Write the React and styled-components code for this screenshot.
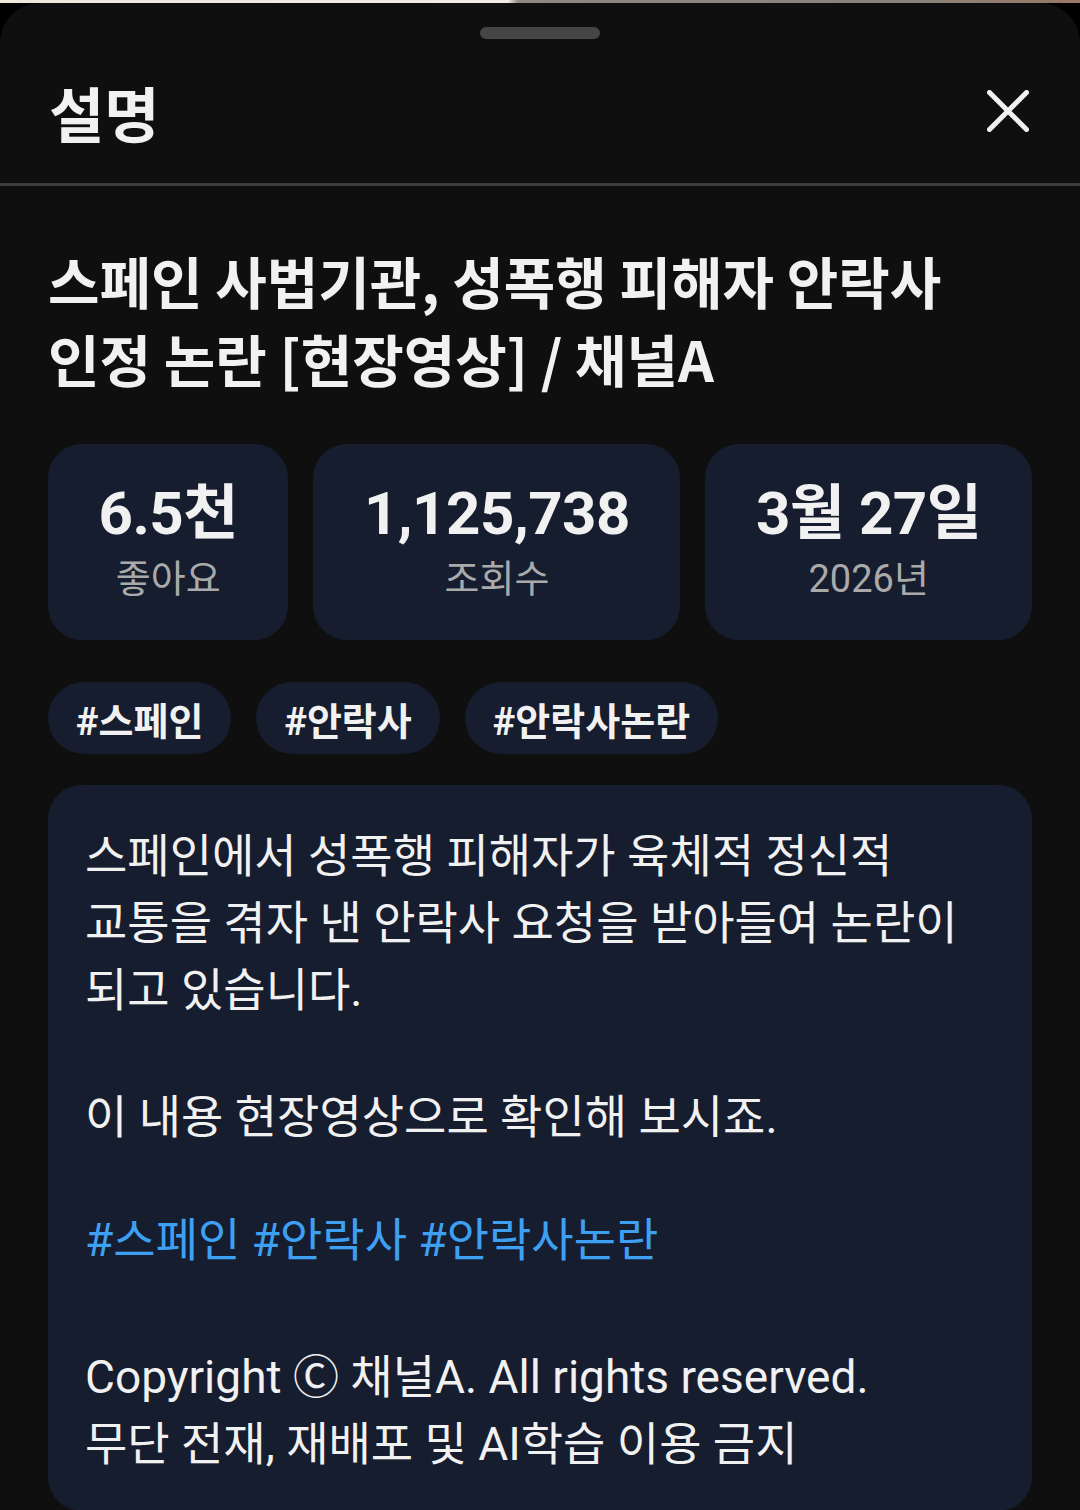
import React from 'react';
import styled, { createGlobalStyle } from 'styled-components';

const GlobalStyle = createGlobalStyle`
    html, body {
        margin: 0;
        padding: 0;
        background: #000000;
    }
    body {
        font-family: Roboto, "Noto Sans CJK KR", sans-serif;
        color: #f1f1f1;
    }
    * {
        box-sizing: border-box;
    }
`

const VideoEdge = styled.div`
    height: 3px;
    background: linear-gradient(90deg, #efe6dc 0%, #f3ece2 47%, #8f887e 48%, #8a8178 85%, #9a7866 100%);
`

const Sheet = styled.div`
    background: #0f0f0f;
    border-radius: 40px 40px 0 0;
    min-height: 1507px;
`

const HandleRow = styled.div`
    display: flex;
    justify-content: center;
    padding-top: 24px;
`

const Handle = styled.div`
    width: 120px;
    height: 12px;
    border-radius: 6px;
    background: #454545;
`

const Header = styled.div`
    display: flex;
    align-items: center;
    justify-content: space-between;
    height: 144px;
    padding: 0 51px 0 49px;

    h2 {
        margin: 0;
        font-family: "Noto Sans CJK KR", sans-serif;
        font-size: 60px;
        font-weight: 700;
        color: #f1f1f1;
    }
`

const CloseButton = styled.button`
    display: flex;
    align-items: center;
    justify-content: center;
    width: 42px;
    height: 42px;
    padding: 0;
    border: none;
    background: transparent;
`

const Divider = styled.div`
    height: 3px;
    background: #3c3c3c;
`

const Body = styled.div`
    padding: 0 48px;
`

const Title = styled.h1`
    margin: 55px 0 0 0;
    font-family: "Noto Sans CJK KR", sans-serif;
    font-size: 56px;
    font-weight: 700;
    line-height: 78px;
    word-break: keep-all;
    color: #f1f1f1;
`

const StatsRow = styled.div`
    display: flex;
    gap: 25px;
    margin-top: 47px;
`

const StatCard = styled.div`
    flex: 1 1 auto;
    display: flex;
    flex-direction: column;
    align-items: center;
    justify-content: center;
    height: 196px;
    padding: 4px 40px 0;
    border-radius: 34px;
    background: #161d2f;

    strong {
        font-size: 60px;
        font-weight: 700;
        line-height: 70px;
        color: #f1f1f1;
        letter-spacing: -0.5px;
        white-space: nowrap;
    }
    span {
        font-size: 38px;
        line-height: 60px;
        color: #aaaaaa;
        white-space: nowrap;
    }
`

const TagRow = styled.div`
    display: flex;
    gap: 25px;
    margin-top: 42px;
`

const Tag = styled.div`
    display: flex;
    align-items: center;
    height: 72px;
    padding: 0 28px;
    border-radius: 36px;
    background: #161d2f;
    font-family: Roboto, "Noto Sans CJK KR", sans-serif;
    font-size: 38px;
    font-weight: 700;
    color: #f1f1f1;
`

const Description = styled.div`
    margin-top: 31px;
    padding: 38px 37px 33px;
    border-radius: 34px;
    background: #161d2f;
    font-family: Roboto, "Noto Sans CJK KR", sans-serif;
    font-size: 46px;
    line-height: 67px;
    word-break: keep-all;
    color: #f1f1f1;
`

const Paragraph = styled.p`
    margin: ${({ $gap }) => $gap || 0}px 0 0 0;
    color: ${({ $link }) => ($link ? '#3ea0f2' : 'inherit')};
`

const CloseIcon = () => (
    <svg width="42" height="42" viewBox="0 0 42 42" fill="none">
        <path d="M2.5 2.5 L39.5 39.5 M39.5 2.5 L2.5 39.5" stroke="#f1f1f1" strokeWidth="5" strokeLinecap="round" />
    </svg>
)

const stats = [
    { value: '6.5천', label: '좋아요' },
    { value: '1,125,738', label: '조회수' },
    { value: '3월 27일', label: '2026년' },
]

const tags = ['#스페인', '#안락사', '#안락사논란']

const App = () => {
    return <div>
        <GlobalStyle />
        <VideoEdge />
        <Sheet>
            <HandleRow><Handle /></HandleRow>
            <Header>
                <h2>설명</h2>
                <CloseButton aria-label="닫기"><CloseIcon /></CloseButton>
            </Header>
            <Divider />
            <Body>
                <Title>스페인 사법기관, 성폭행 피해자 안락사 인정 논란 [현장영상] / 채널A</Title>
                <StatsRow>
                    {stats.map(s => (
                        <StatCard key={s.label}>
                            <strong>{s.value}</strong>
                            <span>{s.label}</span>
                        </StatCard>
                    ))}
                </StatsRow>
                <TagRow>
                    {tags.map(t => <Tag key={t}>{t}</Tag>)}
                </TagRow>
                <Description>
                    <Paragraph>스페인에서 성폭행 피해자가 육체적 정신적 교통을 겪자 낸 안락사 요청을 받아들여 논란이 되고 있습니다.</Paragraph>
                    <Paragraph $gap={60}>이 내용 현장영상으로 확인해 보시죠.</Paragraph>
                    <Paragraph $gap={56} $link>#스페인 #안락사 #안락사논란</Paragraph>
                    <Paragraph $gap={70}>Copyright Ⓒ 채널A. All rights reserved.<br />무단 전재, 재배포 및 AI학습 이용 금지</Paragraph>
                </Description>
            </Body>
        </Sheet>
    </div>
}

export default App;
